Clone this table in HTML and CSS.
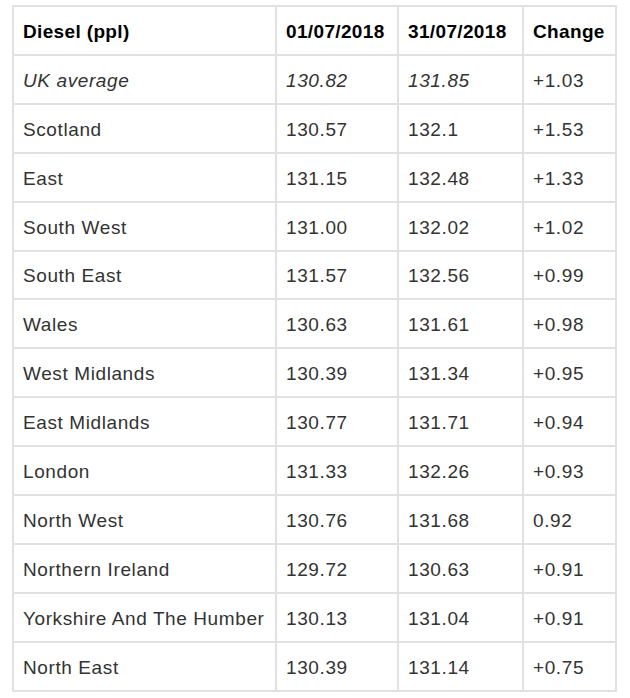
FILE: index.html
```html
<!DOCTYPE html>
<html>
<head>
<meta charset="utf-8">
<link rel="stylesheet" href="styles.css">
</head>
<body>
<table class="prices">
  <colgroup>
    <col class="c-region">
    <col class="c-d1">
    <col class="c-d2">
    <col class="c-chg">
  </colgroup>
  <thead>
    <tr><th>Diesel (ppl)</th><th>01/07/2018</th><th>31/07/2018</th><th>Change</th></tr>
  </thead>
  <tbody>
    <tr><td class="avg">UK average</td><td class="avg">130.82</td><td class="avg">131.85</td><td>+1.03</td></tr>
    <tr><td>Scotland</td><td>130.57</td><td>132.1</td><td>+1.53</td></tr>
    <tr><td>East</td><td>131.15</td><td>132.48</td><td>+1.33</td></tr>
    <tr><td>South West</td><td>131.00</td><td>132.02</td><td>+1.02</td></tr>
    <tr><td>South East</td><td>131.57</td><td>132.56</td><td>+0.99</td></tr>
    <tr><td>Wales</td><td>130.63</td><td>131.61</td><td>+0.98</td></tr>
    <tr><td>West Midlands</td><td>130.39</td><td>131.34</td><td>+0.95</td></tr>
    <tr><td>East Midlands</td><td>130.77</td><td>131.71</td><td>+0.94</td></tr>
    <tr><td>London</td><td>131.33</td><td>132.26</td><td>+0.93</td></tr>
    <tr><td>North West</td><td>130.76</td><td>131.68</td><td>0.92</td></tr>
    <tr><td>Northern Ireland</td><td>129.72</td><td>130.63</td><td>+0.91</td></tr>
    <tr><td>Yorkshire And The Humber</td><td>130.13</td><td>131.04</td><td>+0.91</td></tr>
    <tr><td>North East</td><td>130.39</td><td>131.14</td><td>+0.75</td></tr>
  </tbody>
</table>
</body>
</html>
```
FILE: styles.css
```css
html, body {
  margin: 0;
  padding: 0;
  background: #ffffff;
}
body {
  padding: 5px 0 0 12px;
  font-family: "Liberation Sans", Arial, sans-serif;
}
.prices {
  border-collapse: collapse;
  width: 603px;
  table-layout: fixed;
  font-size: 19px;
  letter-spacing: 0.6px;
  color: #333333;
}
.c-region { width: 263px; }
.c-d1 { width: 122px; }
.c-d2 { width: 125px; }
.c-chg { width: 93px; }
.prices th,
.prices td {
  border: 2px solid #e1e1e1;
  padding: 3px 9px 0;
  height: 43.92px;
  text-align: left;
  vertical-align: middle;
  white-space: nowrap;
}
.prices th {
  font-weight: bold;
  letter-spacing: 0.35px;
  color: #000000;
}
.prices td.avg {
  font-style: italic;
}
```
